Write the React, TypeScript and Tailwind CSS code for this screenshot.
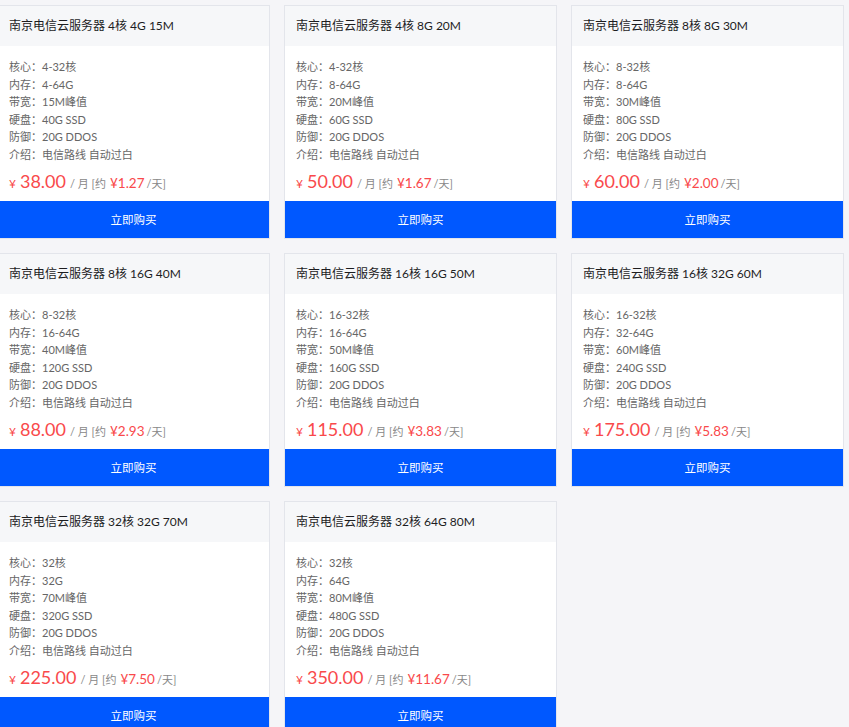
import React from 'react';

interface Plan {
  title: string;
  core: string;
  mem: string;
  bw: string;
  disk: string;
  price: string;
  daily: string;
}

const plans: Plan[] = [
  { title: '南京电信云服务器 4核 4G 15M', core: '4-32核', mem: '4-64G', bw: '15M峰值', disk: '40G SSD', price: '38.00', daily: '1.27' },
  { title: '南京电信云服务器 4核 8G 20M', core: '4-32核', mem: '8-64G', bw: '20M峰值', disk: '60G SSD', price: '50.00', daily: '1.67' },
  { title: '南京电信云服务器 8核 8G 30M', core: '8-32核', mem: '8-64G', bw: '30M峰值', disk: '80G SSD', price: '60.00', daily: '2.00' },
  { title: '南京电信云服务器 8核 16G 40M', core: '8-32核', mem: '16-64G', bw: '40M峰值', disk: '120G SSD', price: '88.00', daily: '2.93' },
  { title: '南京电信云服务器 16核 16G 50M', core: '16-32核', mem: '16-64G', bw: '50M峰值', disk: '160G SSD', price: '115.00', daily: '3.83' },
  { title: '南京电信云服务器 16核 32G 60M', core: '16-32核', mem: '32-64G', bw: '60M峰值', disk: '240G SSD', price: '175.00', daily: '5.83' },
  { title: '南京电信云服务器 32核 32G 70M', core: '32核', mem: '32G', bw: '70M峰值', disk: '320G SSD', price: '225.00', daily: '7.50' },
  { title: '南京电信云服务器 32核 64G 80M', core: '32核', mem: '64G', bw: '80M峰值', disk: '480G SSD', price: '350.00', daily: '11.67' },
];

const PlanCard: React.FC<{ plan: Plan }> = ({ plan }) => {
  const rows: [string, string][] = [
    ['核心', plan.core],
    ['内存', plan.mem],
    ['带宽', plan.bw],
    ['硬盘', plan.disk],
    ['防御', '20G DDOS'],
    ['介绍', '电信路线 自动过白'],
  ];

  return (
    <div className="flex flex-col border border-[#e3e5eb] bg-white">
      <div className="h-[40px] flex items-center px-[11px] bg-[#f6f7f9] text-[12px] text-[#1d1d1f]">
        {plan.title}
      </div>
      <div className="px-[11px] pt-[12px]">
        {rows.map(([k, v]) => (
          <div key={k} className="leading-[17.5px] text-[11px] text-[#666]">
            {k}：{v}
          </div>
        ))}
        <div className="mt-[7px] h-[22px] flex items-baseline text-[#888] text-[11px] whitespace-nowrap">
          <span className="text-[#f9494b] text-[12px] mr-1">¥</span>
          <span className="text-[#f9494b] text-[18px] leading-[22px]">{plan.price}</span>
          <span className="ml-1">/ 月 [约 </span>
          <span className="text-[#f9494b] text-[13.5px] ml-1">¥{plan.daily}</span>
          <span className="ml-0.5">/天]</span>
        </div>
      </div>
      <button className="mt-[9px] h-[37px] bg-[#0058ff] text-white text-[11.5px] w-full">
        立即购买
      </button>
    </div>
  );
};

export default function App() {
  return (
    <div
      className="min-h-[727px] bg-[#f5f5f8] pt-[5px]"
      style={{ fontFamily: 'Lato, "Noto Sans CJK SC", sans-serif' }}
    >
      <div className="ml-[-3px] grid grid-cols-[repeat(3,273px)] gap-x-[14px] gap-y-[14px]">
        {plans.map((p) => (
          <PlanCard key={p.title} plan={p} />
        ))}
      </div>
    </div>
  );
}
